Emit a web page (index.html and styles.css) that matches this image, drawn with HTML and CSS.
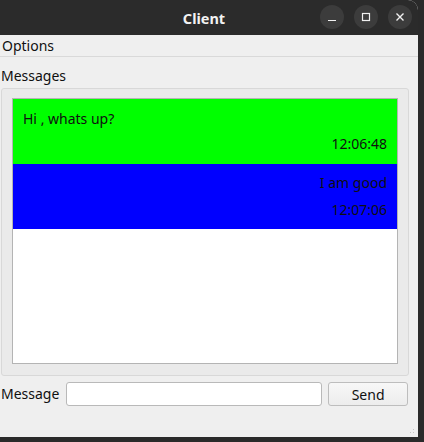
FILE: index.html
```html
<!DOCTYPE html>
<html>
<head>
<meta charset="utf-8">
<link rel="stylesheet" href="styles.css">
</head>
<body>
<div class="window">
  <div class="titlebar">
    <div class="title">Client</div>
    <div class="wbtns">
      <span class="wbtn"><svg width="24" height="24" viewBox="0 0 24 24"><line x1="8" y1="15.5" x2="16" y2="15.5" stroke="#f0f0f0" stroke-width="1.2"/></svg></span>
      <span class="wbtn"><svg width="24" height="24" viewBox="0 0 24 24"><rect x="8.5" y="8.5" width="7" height="7" fill="none" stroke="#f0f0f0" stroke-width="1.2"/></svg></span>
      <span class="wbtn"><svg width="24" height="24" viewBox="0 0 24 24"><path d="M8.5 8.5 L15.5 15.5 M15.5 8.5 L8.5 15.5" stroke="#f0f0f0" stroke-width="1.4"/></svg></span>
    </div>
  </div>
  <div class="menubar"><span class="menuitem">Options</span></div>
  <div class="content">
    <div class="grouplabel">Messages</div>
    <div class="group">
      <div class="list">
        <div class="msg msg-in">
          <div class="msg-text">Hi , whats up?</div>
          <div class="msg-time">12:06:48</div>
        </div>
        <div class="msg msg-out">
          <div class="msg-text right">I am good</div>
          <div class="msg-time">12:07:06</div>
        </div>
      </div>
    </div>
    <div class="inputrow">
      <span class="inlabel">Message</span>
      <input class="field" type="text">
      <button class="send">Send</button>
    </div>
  </div>
  <div class="grip"></div>
</div>
</body>
</html>
```
FILE: styles.css
```css
* { box-sizing: border-box; }
html, body { margin: 0; padding: 0; }
body {
  width: 424px;
  height: 442px;
  background: #2a2a2a;
  font-family: "Noto Sans", "DejaVu Sans", sans-serif;
  font-size: 14px;
  color: #101010;
  overflow: hidden;
}
.window {
  position: relative;
  width: 418px;
  height: 437px;
  background: #efefef;
  border-top-right-radius: 10px;
  overflow: hidden;
  display: flex;
  flex-direction: column;
}
.titlebar {
  position: relative;
  height: 35px;
  background: #2b2b2b;
  display: flex;
  align-items: center;
  justify-content: center;
  flex-shrink: 0;
}
.title {
  color: #f2f2f2;
  font-weight: bold;
  font-size: 14.5px;
  margin-left: -10px;
}
.wbtns {
  position: absolute;
  right: 6px;
  top: 5px;
  display: flex;
  gap: 10px;
}
.wbtn {
  width: 24px;
  height: 24px;
  border-radius: 50%;
  background: #3c3c3c;
  display: block;
}
.wbtn svg { display: block; }
.menubar {
  height: 22px;
  border-bottom: 1px solid #d9d9d9;
  display: flex;
  align-items: center;
  padding-left: 2px;
  flex-shrink: 0;
}
.menuitem { line-height: 20px; }
.content {
  display: flex;
  flex-direction: column;
  padding: 0 10px 0 1px;
}
.grouplabel {
  height: 31px;
  line-height: 20px;
  padding-top: 9px;
}
.group {
  width: 408px;
  height: 288px;
  border: 1px solid #d8d8d8;
  border-radius: 3px;
  background: #eaeaea;
  padding: 9px 10px 11px 10px;
}
.list {
  height: 100%;
  background: #ffffff;
  border: 1px solid #b4b4b4;
}
.msg {
  height: 65px;
  padding: 10px 10px 0 10px;
  display: flex;
  flex-direction: column;
  gap: 5px;
}
.msg-in { background: #00ff00; }
.msg-out { background: #0000ff; padding-top: 9px; gap: 7px; }
.msg-text { line-height: 20px; }
.msg-text.right { text-align: right; }
.msg-time { line-height: 20px; text-align: right; }
.inputrow {
  margin-top: 6px;
  display: flex;
  align-items: center;
  height: 24px;
}
.inlabel {
  width: 65px;
  line-height: 20px;
}
.field {
  width: 257px;
  height: 24px;
  border: 1px solid #b9b9b9;
  border-radius: 3px;
  background: #ffffff;
  margin: 0;
  padding: 0 4px;
  font: inherit;
}
.send {
  margin-left: 6px;
  width: 80px;
  height: 24px;
  border: 1px solid #bdbdbd;
  border-radius: 3px;
  background: linear-gradient(#f7f7f7, #ececec);
  font: inherit;
  color: #101010;
  padding: 0;
}
.grip {
  position: absolute;
  right: 2px;
  bottom: 2px;
  width: 10px;
  height: 10px;
  background-image: radial-gradient(circle, #c4c4c4 0.8px, transparent 1px);
  background-size: 3px 3px;
  clip-path: polygon(100% 0, 100% 100%, 0 100%);
}
```
